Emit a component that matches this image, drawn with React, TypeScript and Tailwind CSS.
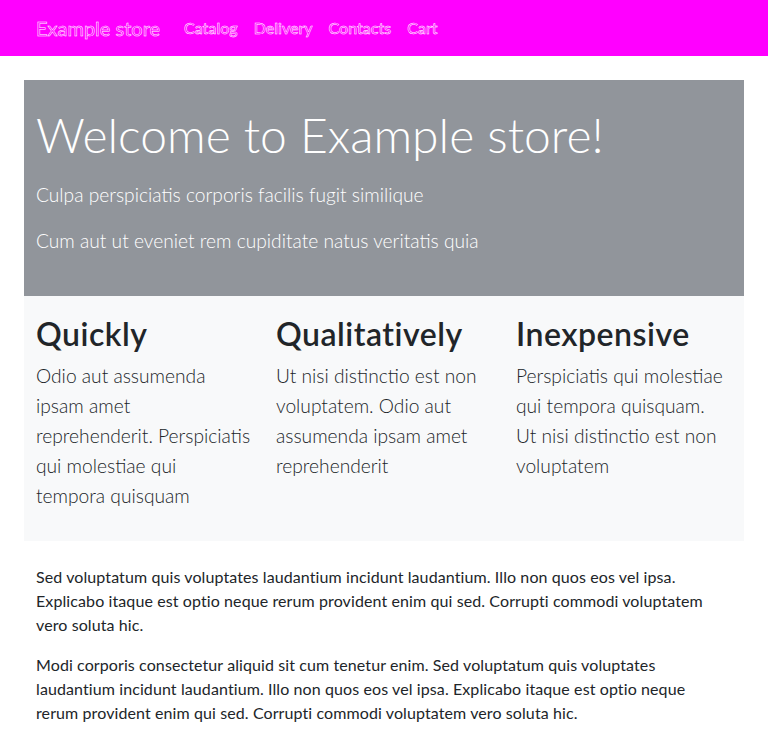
import React from "react";

const features = [
  {
    title: "Quickly",
    lines: ["Odio aut assumenda", "ipsam amet", "reprehenderit. Perspiciatis", "qui molestiae qui", "tempora quisquam"],
  },
  {
    title: "Qualitatively",
    lines: ["Ut nisi distinctio est non", "voluptatem. Odio aut", "assumenda ipsam amet", "reprehenderit"],
  },
  {
    title: "Inexpensive",
    lines: ["Perspiciatis qui molestiae", "qui tempora quisquam.", "Ut nisi distinctio est non", "voluptatem"],
  },
];

const links = ["Catalog", "Delivery", "Contacts", "Cart"];

function Lines({ lines }: { lines: string[] }) {
  return (
    <>
      {lines.map((l, i) => (
        <React.Fragment key={i}>
          {l}
          {i < lines.length - 1 && <br />}
        </React.Fragment>
      ))}
    </>
  );
}

export default function App() {
  return (
    <div className="min-h-screen bg-white font-['Lato',_'Noto_Sans',_sans-serif] text-[#212529]">
      <nav className="bg-[#ff00ff] py-2">
        <div className="mx-auto flex w-[720px] items-center px-3">
          <a className="mr-4 py-[5px] text-[20px] leading-[30px] text-transparent [-webkit-text-stroke:0.5px_white]">
            Example store
          </a>
          <ul className="flex">
            {links.map((l) => (
              <li key={l}>
                <a className="block px-2 py-2 text-[16px] font-medium leading-6 text-transparent [-webkit-text-stroke:0.5px_white]">
                  {l}
                </a>
              </li>
            ))}
          </ul>
        </div>
      </nav>

      <main className="mx-auto w-[720px]">
        <section className="mt-6 bg-[#91959b] px-3 pt-[26px] pb-6 text-white">
          <h1 className="mb-4 text-[48px] font-light leading-[57.6px]">Welcome to Example store!</h1>
          <p className="mb-4 text-[19.2px] font-light leading-[30px]">
            Culpa perspiciatis corporis facilis fugit similique
          </p>
          <p className="mb-4 text-[19.2px] font-light leading-[30px]">
            Cum aut ut eveniet rem cupiditate natus veritatis quia
          </p>
        </section>

        <section className="grid grid-cols-3 bg-[#f8f9fa] pt-[19px] pb-[14px]">
          {features.map((f) => (
            <div key={f.title} className="px-3">
              <h2 className="mb-2 text-[32px] font-semibold leading-[38.4px] tracking-[0.5px] text-[#212529]">
                {f.title}
              </h2>
              <p className="mb-4 whitespace-nowrap text-[19.2px] font-light leading-[30px] text-[#212529]">
                <Lines lines={f.lines} />
              </p>
            </div>
          ))}
        </section>

        <section className="mt-6 px-3 text-[16px] leading-6 tracking-[0.1px] text-[#212529]">
          <p className="mb-4">
            <Lines
              lines={[
                "Sed voluptatum quis voluptates laudantium incidunt laudantium. Illo non quos eos vel ipsa.",
                "Explicabo itaque est optio neque rerum provident enim qui sed. Corrupti commodi voluptatem",
                "vero soluta hic.",
              ]}
            />
          </p>
          <p className="mb-4">
            <Lines
              lines={[
                "Modi corporis consectetur aliquid sit cum tenetur enim. Sed voluptatum quis voluptates",
                "laudantium incidunt laudantium. Illo non quos eos vel ipsa. Explicabo itaque est optio neque",
                "rerum provident enim qui sed. Corrupti commodi voluptatem vero soluta hic.",
              ]}
            />
          </p>
        </section>
      </main>
    </div>
  );
}
